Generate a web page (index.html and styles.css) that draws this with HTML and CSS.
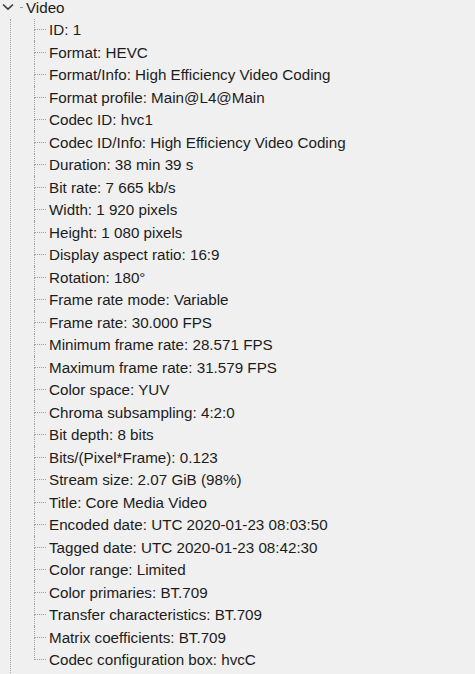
FILE: index.html
```html
<!DOCTYPE html>
<html>
<head>
<meta charset="utf-8">
<link rel="stylesheet" href="styles.css">
</head>
<body>
<div class="node">
  <div class="root-row">
    <svg class="chev" width="12" height="8" viewBox="0 0 12 8"><path d="M1 1.5 L6 6.2 L11 1.5" fill="none" stroke="#3a3a3a" stroke-width="1.6"/></svg>
    <span class="rdot"></span>
    <span class="label">Video</span>
  </div>
  <div class="children">
    <ul class="items">
      <li><span class="branch"><span class="up"></span><span class="down"></span></span><span class="label">ID: 1</span></li>
      <li><span class="branch"><span class="up"></span><span class="down"></span></span><span class="label">Format: HEVC</span></li>
      <li><span class="branch"><span class="up"></span><span class="down"></span></span><span class="label">Format/Info: High Efficiency Video Coding</span></li>
      <li><span class="branch"><span class="up"></span><span class="down"></span></span><span class="label">Format profile: Main@L4@Main</span></li>
      <li><span class="branch"><span class="up"></span><span class="down"></span></span><span class="label">Codec ID: hvc1</span></li>
      <li><span class="branch"><span class="up"></span><span class="down"></span></span><span class="label">Codec ID/Info: High Efficiency Video Coding</span></li>
      <li><span class="branch"><span class="up"></span><span class="down"></span></span><span class="label">Duration: 38 min 39 s</span></li>
      <li><span class="branch"><span class="up"></span><span class="down"></span></span><span class="label">Bit rate: 7 665 kb/s</span></li>
      <li><span class="branch"><span class="up"></span><span class="down"></span></span><span class="label">Width: 1 920 pixels</span></li>
      <li><span class="branch"><span class="up"></span><span class="down"></span></span><span class="label">Height: 1 080 pixels</span></li>
      <li><span class="branch"><span class="up"></span><span class="down"></span></span><span class="label">Display aspect ratio: 16:9</span></li>
      <li><span class="branch"><span class="up"></span><span class="down"></span></span><span class="label">Rotation: 180°</span></li>
      <li><span class="branch"><span class="up"></span><span class="down"></span></span><span class="label">Frame rate mode: Variable</span></li>
      <li><span class="branch"><span class="up"></span><span class="down"></span></span><span class="label">Frame rate: 30.000 FPS</span></li>
      <li><span class="branch"><span class="up"></span><span class="down"></span></span><span class="label">Minimum frame rate: 28.571 FPS</span></li>
      <li><span class="branch"><span class="up"></span><span class="down"></span></span><span class="label">Maximum frame rate: 31.579 FPS</span></li>
      <li><span class="branch"><span class="up"></span><span class="down"></span></span><span class="label">Color space: YUV</span></li>
      <li><span class="branch"><span class="up"></span><span class="down"></span></span><span class="label">Chroma subsampling: 4:2:0</span></li>
      <li><span class="branch"><span class="up"></span><span class="down"></span></span><span class="label">Bit depth: 8 bits</span></li>
      <li><span class="branch"><span class="up"></span><span class="down"></span></span><span class="label">Bits/(Pixel*Frame): 0.123</span></li>
      <li><span class="branch"><span class="up"></span><span class="down"></span></span><span class="label">Stream size: 2.07 GiB (98%)</span></li>
      <li><span class="branch"><span class="up"></span><span class="down"></span></span><span class="label">Title: Core Media Video</span></li>
      <li><span class="branch"><span class="up"></span><span class="down"></span></span><span class="label">Encoded date: UTC 2020-01-23 08:03:50</span></li>
      <li><span class="branch"><span class="up"></span><span class="down"></span></span><span class="label">Tagged date: UTC 2020-01-23 08:42:30</span></li>
      <li><span class="branch"><span class="up"></span><span class="down"></span></span><span class="label">Color range: Limited</span></li>
      <li><span class="branch"><span class="up"></span><span class="down"></span></span><span class="label">Color primaries: BT.709</span></li>
      <li><span class="branch"><span class="up"></span><span class="down"></span></span><span class="label">Transfer characteristics: BT.709</span></li>
      <li><span class="branch"><span class="up"></span><span class="down"></span></span><span class="label">Matrix coefficients: BT.709</span></li>
      <li><span class="branch"><span class="up"></span><span class="down"></span></span><span class="label">Codec configuration box: hvcC</span></li>
    </ul>
  </div>
</div>
</body>
</html>
```

FILE: styles.css
```css
html, body {
  margin: 0;
  padding: 0;
  background: #f0f0f0;
  height: 674px;
  overflow: hidden;
}
body {
  font-family: "Liberation Sans", Arial, sans-serif;
  font-size: 15.2px;
  color: #1c1c1c;
}
.node {
  margin-top: -4px;
}
.root-row {
  display: flex;
  align-items: center;
  height: 22.5px;
}
.chev {
  margin-left: 2px;
  display: block;
}
.rdot {
  width: 2px;
  height: 0;
  border-top: 1px dotted #9a9a9a;
  margin-left: 6px;
}
.root-row .label {
  margin-left: 4px;
}
.children {
  margin-left: 10px;
  border-left: 1px dotted #a0a0a0;
  padding-left: 23px;
  padding-bottom: 20px;
}
.items {
  list-style: none;
  margin: 0;
  padding: 0;
}
.items li {
  display: flex;
  height: 22.5px;
  align-items: stretch;
}
.branch {
  width: 12px;
  display: flex;
  flex-direction: column;
  flex: none;
}
.up {
  flex: 1;
  border-left: 1px dotted #a0a0a0;
  border-bottom: 1px dotted #a0a0a0;
}
.down {
  flex: 1;
  border-left: 1px dotted #a0a0a0;
}
.items li:last-child .down {
  border-left: none;
}
.items .label {
  display: flex;
  align-items: center;
  margin-left: 3px;
  white-space: nowrap;
}
```
